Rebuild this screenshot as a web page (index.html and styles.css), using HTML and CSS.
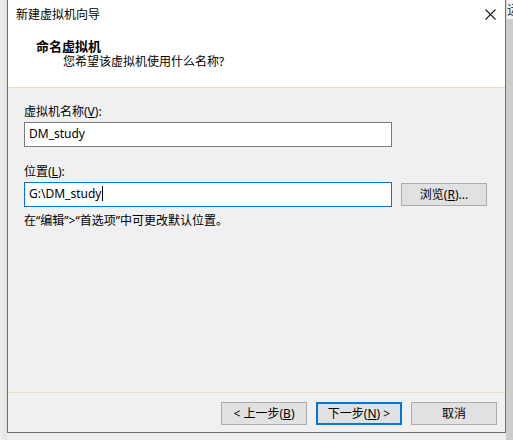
FILE: index.html
```html
<!DOCTYPE html>
<html lang="zh-CN">
<head>
<meta charset="utf-8">
<title>新建虚拟机向导</title>
<link rel="stylesheet" href="styles.css">
</head>
<body>
<div class="desk">
  <div class="shadow-left"></div>
  <div class="window">
    <div class="header">
      <div class="titlebar">
        <span class="title">新建虚拟机向导</span>
        <svg class="close" width="11" height="11" viewBox="0 0 11 11"><path d="M0.5 0.5 L10.5 10.5 M10.5 0.5 L0.5 10.5" stroke="#1a1a1a" stroke-width="1.1" fill="none"/></svg>
      </div>
      <div class="heading">命名虚拟机</div>
      <div class="subheading">您希望该虚拟机使用什么名称?</div>
    </div>
    <div class="body">
      <div class="label first">虚拟机名称(<u>V</u>):</div>
      <div class="input">DM_study</div>
      <div class="label second">位置(<u>L</u>):</div>
      <div class="row">
        <div class="input focused">G:\DM_study<span class="caret"></span></div>
        <div class="btn browse">浏览(<u>R</u>)...</div>
      </div>
      <div class="note">在“编辑”&gt;“首选项”中可更改默认位置。</div>
    </div>
    <div class="footer">
      <div class="btn">&lt; 上一步(<u>B</u>)</div>
      <div class="btn primary">下一步(<u>N</u>) &gt;</div>
      <div class="btn">取消</div>
    </div>
  </div>
  <div class="behind">
    <div class="behind-top"><span class="behind-glyph">运</span></div>
    <div class="behind-rest"></div>
  </div>
</div>
</body>
</html>
```

FILE: styles.css
```css
html, body {
  margin: 0;
  padding: 0;
  background: #eeeeee;
}

.desk {
  width: 513px;
  height: 440px;
  display: flex;
  align-items: flex-start;
  background: #eeeeee;
  overflow: hidden;
  font-family: "Noto Sans", "Noto Sans CJK SC", sans-serif;
  font-size: 12px;
  color: #000000;
}

.shadow-left {
  width: 7px;
  height: 440px;
  flex: none;
  background: linear-gradient(to right, #f0f0f0, #e3e3e3);
}

.window {
  width: 497px;
  height: 432px;
  flex: none;
  border: 1px solid #6f6f6f;
  border-top: none;
  background: #f0f0f0;
  display: flex;
  flex-direction: column;
}

.header {
  height: 87px;
  background: #ffffff;
  border-bottom: 1px solid #e8dfbf;
  flex: none;
}

.titlebar {
  height: 30px;
  display: flex;
  align-items: center;
  justify-content: space-between;
  padding: 0 9px 0 8px;
}

.title {
  line-height: 16px;
}

.close {
  display: block;
  margin-top: -1px;
}

.heading {
  margin-top: 9px;
  padding-left: 28px;
  font-size: 13px;
  font-weight: 700;
  line-height: 15px;
}

.subheading {
  padding-left: 55px;
  line-height: 16px;
}

.body {
  flex: 1;
  padding-left: 16px;
}

.label {
  line-height: 16px;
}

.label.first {
  margin-top: 16px;
}

.label.second {
  margin-top: 17px;
}

u {
  text-decoration: underline;
  text-underline-offset: 1px;
  text-decoration-thickness: 1px;
}

.input {
  width: 368px;
  height: 25px;
  box-sizing: border-box;
  margin-top: 2px;
  border: 1px solid #7a7a7a;
  background: #ffffff;
  padding: 0 0 2px 4px;
  display: flex;
  align-items: center;
  line-height: 16px;
}

.input.focused {
  border-color: #0078d7;
}

.caret {
  display: inline-block;
  width: 1px;
  height: 15px;
  background: #000000;
  margin-left: 1px;
}

.row {
  display: flex;
  align-items: flex-start;
  margin-top: 2px;
}

.row .input {
  margin-top: 0;
}

.btn {
  width: 86px;
  height: 23px;
  box-sizing: border-box;
  border: 1px solid #adadad;
  background: #e1e1e1;
  display: flex;
  align-items: center;
  justify-content: center;
  line-height: 16px;
  flex: none;
}

.btn.browse {
  margin-top: 1px;
  margin-left: 9px;
}

.btn.primary {
  border: 2px solid #0078d7;
}

.note {
  margin-top: 6px;
  line-height: 16px;
}

.footer {
  flex: none;
  border-top: 1px solid #e8dfbf;
  padding: 9px 8px 7px 0;
  display: flex;
  justify-content: flex-end;
  gap: 9px;
}

.behind {
  width: 7px;
  height: 440px;
  flex: none;
  display: flex;
  flex-direction: column;
  overflow: hidden;
}

.behind-top {
  height: 19px;
  background: #f4f4f4;
  border-left: 1px solid #dcdcdc;
  overflow: hidden;
  white-space: nowrap;
}

.behind-glyph {
  display: block;
  margin-left: 0px;
  margin-top: 2px;
  font-size: 13px;
  line-height: 14px;
  color: #3a3a6a;
}

.behind-rest {
  flex: 1;
  background: #cdcdcd;
}
```
